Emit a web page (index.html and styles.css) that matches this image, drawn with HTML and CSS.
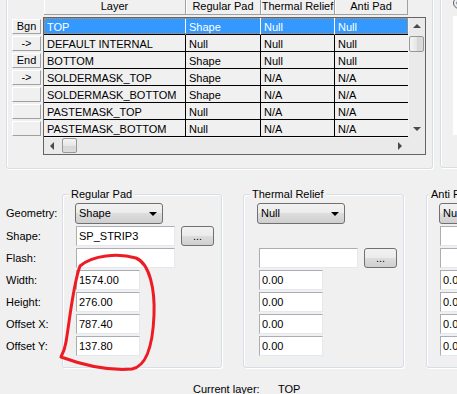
FILE: index.html
```html
<!DOCTYPE html>
<html lang="en">
<head>
    <meta charset="UTF-8">
    <title>Padstack Layers</title>
    <link rel="stylesheet" href="styles.css">
</head>
<body>
    <div class="top">
        <div class="gbox layers">
            <div class="rowbtns">
                <div class="rbtn">Bgn</div>
                <div class="rbtn">-&gt;</div>
                <div class="rbtn">End</div>
                <div class="rbtn">-&gt;</div>
                <div class="rbtn"></div>
                <div class="rbtn"></div>
                <div class="rbtn"></div>
            </div>
            <div class="sheet">
                <div class="hdr">
                    <div class="hcell c1">Layer</div>
                    <div class="hcell c2">Regular Pad</div>
                    <div class="hcell c3">Thermal Relief</div>
                    <div class="hcell c4">Anti Pad</div>
                </div>
                <div class="grid">
                    <div class="rows">
                        <div class="row sel"><div class="cell">TOP</div><div class="cell">Shape</div><div class="cell">Null</div><div class="cell">Null</div></div>
                        <div class="row"><div class="cell">DEFAULT INTERNAL</div><div class="cell">Null</div><div class="cell">Null</div><div class="cell">Null</div></div>
                        <div class="row"><div class="cell">BOTTOM</div><div class="cell">Shape</div><div class="cell">Null</div><div class="cell">Null</div></div>
                        <div class="row"><div class="cell">SOLDERMASK_TOP</div><div class="cell">Shape</div><div class="cell">N/A</div><div class="cell">N/A</div></div>
                        <div class="row"><div class="cell">SOLDERMASK_BOTTOM</div><div class="cell">Shape</div><div class="cell">N/A</div><div class="cell">N/A</div></div>
                        <div class="row"><div class="cell">PASTEMASK_TOP</div><div class="cell">Null</div><div class="cell">N/A</div><div class="cell">N/A</div></div>
                        <div class="row"><div class="cell">PASTEMASK_BOTTOM</div><div class="cell">Null</div><div class="cell">N/A</div><div class="cell">N/A</div></div>
                    </div>
                    <div class="vscroll">
                        <div class="sarrow"><span class="tri up"></span></div>
                        <div class="thumb v"></div>
                        <div class="sfill"></div>
                        <div class="sarrow"><span class="tri down"></span></div>
                    </div>
                    <div class="hscroll">
                        <div class="sarrow"><span class="tri left"></span></div>
                        <div class="thumb h"></div>
                        <div class="sfill"></div>
                        <div class="sarrow"><span class="tri right"></span></div>
                    </div>
                    <div class="corner"></div>
                </div>
            </div>
        </div>
        <div class="gbox side">
            <span class="radio"></span>
            <div class="list"></div>
        </div>
    </div>

    <div class="pads">
        <div class="labels">
            <div class="lbl geo">Geometry:</div>
            <div class="lbl">Shape:</div>
            <div class="lbl">Flash:</div>
            <div class="lbl">Width:</div>
            <div class="lbl">Height:</div>
            <div class="lbl">Offset X:</div>
            <div class="lbl">Offset Y:</div>
        </div>

        <div class="group regular">
            <div class="gtitle">Regular Pad</div>
            <div class="gbody">
                <div class="dd"><span>Shape</span><span class="tri down dark"></span></div>
                <div class="frow"><div class="tb">SP_STRIP3</div><div class="btn3">...</div></div>
                <div class="frow"><div class="tb"></div></div>
                <div class="frow"><div class="tb num">1574.00</div></div>
                <div class="frow"><div class="tb num">276.00</div></div>
                <div class="frow"><div class="tb num">787.40</div></div>
                <div class="frow"><div class="tb num">137.80</div></div>
            </div>
        </div>

        <div class="group thermal">
            <div class="gtitle">Thermal Relief</div>
            <div class="gbody">
                <div class="dd"><span>Null</span><span class="tri down dark"></span></div>
                <div class="frow"></div>
                <div class="frow"><div class="tb"></div><div class="btn3">...</div></div>
                <div class="frow"><div class="tb num">0.00</div></div>
                <div class="frow"><div class="tb num">0.00</div></div>
                <div class="frow"><div class="tb num">0.00</div></div>
                <div class="frow"><div class="tb num">0.00</div></div>
            </div>
        </div>

        <div class="group anti">
            <div class="gtitle">Anti Pad</div>
            <div class="gbody">
                <div class="dd"><span>Null</span><span class="tri down dark"></span></div>
                <div class="frow"><div class="tb"></div></div>
                <div class="frow"><div class="tb"></div></div>
                <div class="frow"><div class="tb num">0.00</div></div>
                <div class="frow"><div class="tb num">0.00</div></div>
                <div class="frow"><div class="tb num">0.00</div></div>
                <div class="frow"><div class="tb num">0.00</div></div>
            </div>
        </div>
    </div>

    <div class="cur">
        <span class="cur-lbl">Current layer:</span>
        <span>TOP</span>
    </div>

    <!-- hand drawn marker around the size fields -->
    <svg class="scribble" width="457" height="394" viewBox="0 0 457 394">
        <path d="M61,357 C80,364 108,371 132,369 C148,366 153,340 154,315 C155,290 150,264 136,258 C118,253 93,255 80,266 C73,285 70,318 66,342 C65,349 63,353 61,357"
              fill="none" stroke="#ed1c24" stroke-width="3" stroke-linecap="round" stroke-linejoin="round"/>
    </svg>
</body>
</html>
```

FILE: styles.css
```css
body {
    margin: 0;
    height: 394px;
    position: relative;
    overflow: hidden;
    background: #f0f0f0;
    color: #000;
    font-family: 'Liberation Sans', Arial, sans-serif;
    font-size: 11px;
}

.top {
    display: flex;
    gap: 7px;
    margin: -10px 0 0 6px;
}

.gbox {
    border: 1px solid #d5dfe5;
    border-radius: 3px;
    box-shadow: inset 1px 1px 0 #fff, 1px 1px 0 #fff;
    box-sizing: border-box;
    flex: none;
}

.layers {
    width: 427px;
    height: 179px;
    display: flex;
    padding: 7px 0 0 5px;
}

.rowbtns {
    width: 29px;
    padding-top: 21px;
    margin-right: 1px;
}

.rbtn {
    height: 15px;
    box-sizing: border-box;
    margin-bottom: 2px;
    border: 1px solid;
    border-color: #fff #a0a0a0 #a0a0a0 #fff;
    text-align: center;
    line-height: 13px;
}

.sheet {
    margin-left: 1px;
}

.hdr {
    display: flex;
    margin: 0 0 2px 1px;
}

.hcell {
    height: 17px;
    box-sizing: border-box;
    border-right: 1px solid #a0a0a0;
    border-bottom: 1px solid #a0a0a0;
    box-shadow: inset 1px 1px 0 #fff;
    text-align: center;
    line-height: 16px;
    white-space: nowrap;
    overflow: hidden;
}

.c1 { width: 142px; }
.c2 { width: 75px; }
.c3 { width: 74px; }
.c4 { width: 73px; }

.grid {
    border: 1px solid #646464;
    display: grid;
    grid-template-columns: 364px 17px;
    grid-template-rows: 119px 17px;
}

.row {
    display: grid;
    grid-template-columns: 142px 75px 74px 73px;
    height: 17px;
    position: relative;
}

.cell {
    box-sizing: border-box;
    border-right: 1px solid #000;
    border-bottom: 1px solid #000;
    padding: 2px 0 0 3px;
    line-height: 14px;
    white-space: nowrap;
    overflow: hidden;
}

.cell:last-child {
    border-right: 0;
}

.row.sel .cell {
    background: #3399ff;
    color: #fff;
    border-right-color: #fff;
}

.row.sel .cell:last-child {
    border-right: 0;
}

/* focus rectangle */
.row.sel::after {
    content: '';
    position: absolute;
    left: 0;
    top: 0;
    right: 0;
    bottom: 1px;
    border: 1px dotted #e0883a;
}

.vscroll,
.hscroll {
    background: #eaeaea;
    display: flex;
}

.vscroll {
    flex-direction: column;
    border-left: 1px solid #f4f4f4;
    box-sizing: border-box;
}

.hscroll {
    border-top: 1px solid #f4f4f4;
    box-sizing: border-box;
}

.corner {
    background: #eaeaea;
}

.sarrow {
    width: 16px;
    height: 16px;
    flex: none;
    display: flex;
    align-items: center;
    justify-content: center;
}

.sfill {
    flex: 1;
}

.thumb {
    flex: none;
    box-sizing: border-box;
    border: 1px solid #979797;
    border-radius: 2px;
}

.thumb.v {
    width: 15px;
    height: 16px;
    margin: 2px 0 0 0;
    background: linear-gradient(to right, #f4f4f4, #e6e6e6 50%, #d6d6d6 51%, #dcdcdc);
}

.thumb.h {
    width: 15px;
    height: 15px;
    margin: 0 0 0 2px;
    background: linear-gradient(#f4f4f4, #e6e6e6 50%, #d6d6d6 51%, #dcdcdc);
}

.tri {
    width: 0;
    height: 0;
    display: inline-block;
}

.tri.up {
    border-left: 4px solid transparent;
    border-right: 4px solid transparent;
    border-bottom: 4px solid #4a4a4a;
}

.tri.down {
    border-left: 4px solid transparent;
    border-right: 4px solid transparent;
    border-top: 4px solid #4a4a4a;
}

.tri.left {
    border-top: 4px solid transparent;
    border-bottom: 4px solid transparent;
    border-right: 4px solid #4a4a4a;
}

.tri.right {
    border-top: 4px solid transparent;
    border-bottom: 4px solid transparent;
    border-left: 4px solid #4a4a4a;
}

.tri.dark {
    border-top-color: #000;
}

.side {
    width: 60px;
    height: 178px;
    padding: 6px 0 0 12px;
}

.radio {
    display: block;
    width: 12px;
    height: 12px;
    box-sizing: border-box;
    border: 1px solid #5e5e5e;
    border-radius: 50%;
    background: radial-gradient(circle, #1d4d7a 0, #1d4d7a 2px, #e6e6e6 3px, #fdfdfd);
}

.list {
    margin-top: 7px;
    height: 119px;
    background: #fff;
}

/* pad settings */
.pads {
    display: flex;
    align-items: flex-start;
    margin-top: 25px;
}

.labels {
    width: 56px;
    margin-left: 6px;
    padding-top: 9px;
    flex: none;
}

.lbl {
    height: 20px;
    line-height: 20px;
    margin-bottom: 2px;
    white-space: nowrap;
}

.lbl.geo {
    height: 21px;
    line-height: 21px;
}

.group {
    height: 174px;
    box-sizing: border-box;
    border: 1px solid #d5dfe5;
    border-radius: 3px;
    box-shadow: inset 1px 1px 0 #fff, 1px 1px 0 #fff;
    flex: none;
}

.regular { width: 160px; }
.thermal { width: 161px; margin-left: 21px; }
.anti { width: 80px; margin-left: 22px; }

.gtitle {
    display: table;
    margin: -7px 0 0 6px;
    padding: 0 2px;
    background: #f0f0f0;
    line-height: 13px;
    white-space: nowrap;
}

.anti .gtitle {
    margin-left: 2px;
}

.gbody {
    padding-left: 12px;
}

.thermal .gbody {
    padding-left: 13px;
}

.dd {
    width: 88px;
    height: 21px;
    box-sizing: border-box;
    margin: 2px 0;
    padding: 0 5px 0 3px;
    border: 1px solid #707070;
    border-radius: 3px;
    background: linear-gradient(#f2f2f2, #ebebeb 50%, #dddddd 50%, #cfcfcf);
    display: flex;
    justify-content: space-between;
    align-items: center;
    line-height: 19px;
}

.frow {
    display: flex;
    gap: 6px;
    height: 20px;
    margin-bottom: 2px;
}

.tb {
    width: 99px;
    height: 20px;
    box-sizing: border-box;
    margin-left: 1px;
    padding-left: 2px;
    border: 1px solid;
    border-color: #abadb3 #e3e9ef #e3e9ef #abadb3;
    background: #fff;
    line-height: 18px;
    white-space: nowrap;
    overflow: hidden;
}

.thermal .tb {
    margin-left: 2px;
}

.tb.num {
    width: 64px;
}

.btn3 {
    width: 33px;
    height: 20px;
    box-sizing: border-box;
    border: 1px solid #707070;
    border-radius: 3px;
    background: linear-gradient(#f2f2f2, #ebebeb 50%, #dddddd 50%, #cfcfcf);
    text-align: center;
    line-height: 18px;
}

.cur {
    display: flex;
    margin-top: 15px;
    padding-left: 193px;
    line-height: 13px;
}

.cur-lbl {
    width: 85px;
}

.scribble {
    position: absolute;
    left: 0;
    top: 0;
    pointer-events: none;
}
```
